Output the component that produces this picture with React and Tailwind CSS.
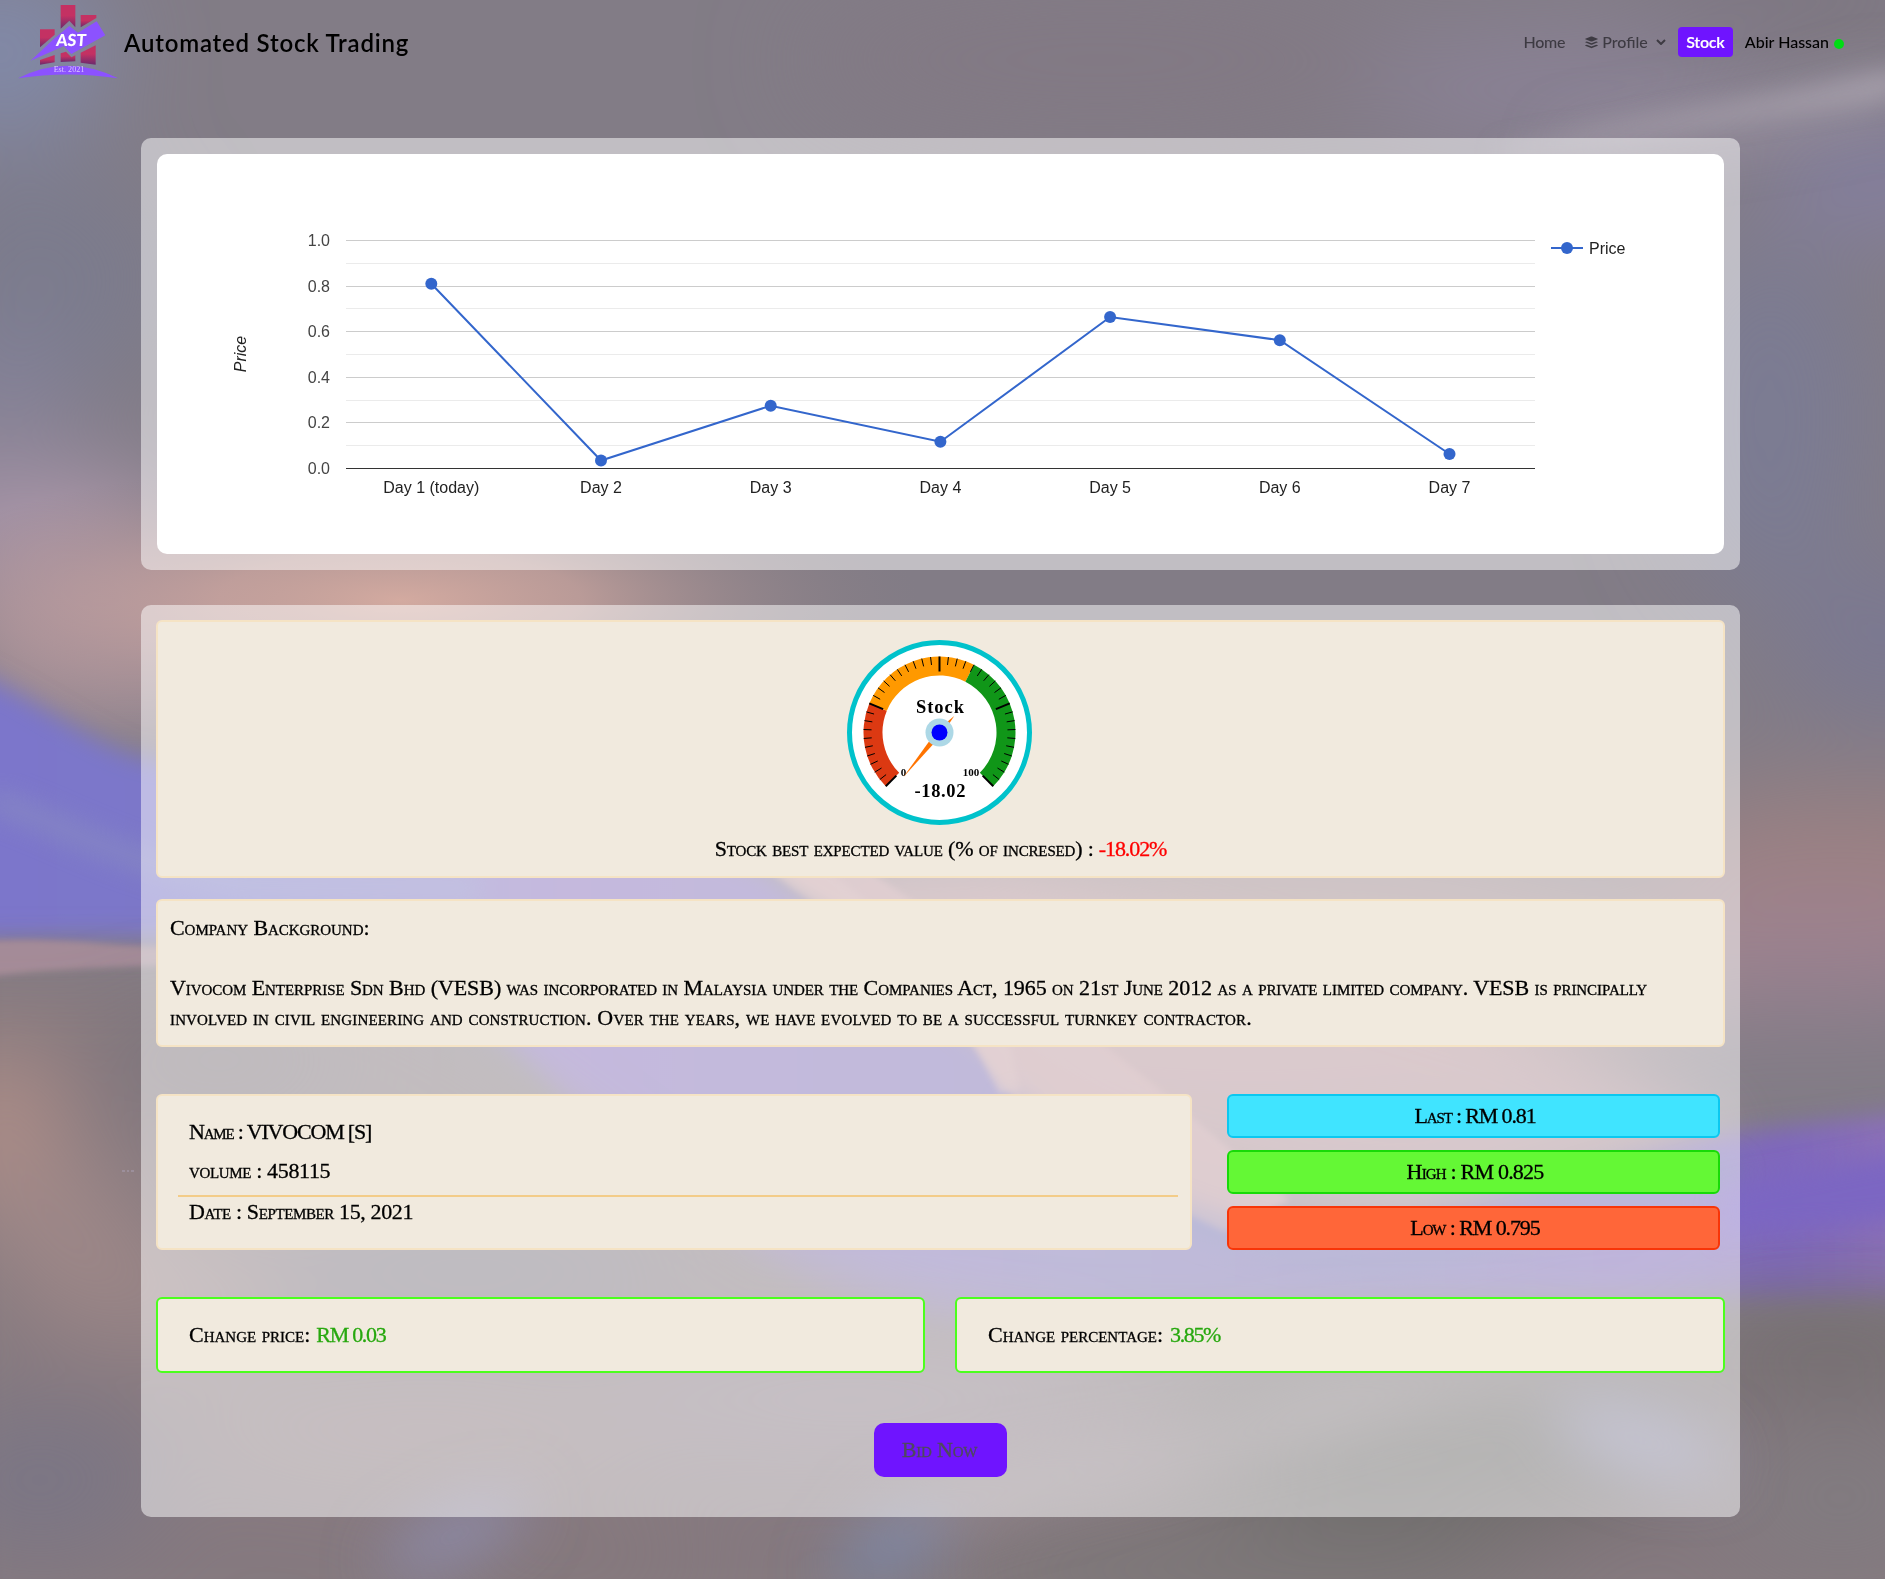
const days = ["Day 1 (today)", "Day 2", "Day 3", "Day 4", "Day 5", "Day 6", "Day 7"];
const pointY = [129.7, 306.5, 251.7, 287.8, 163, 186.2, 300];
const gridY = [86.5, 132.5, 177.5, 223.5, 268.5];
const minorY = [109.5, 154.5, 200.5, 246.5, 291.5];
const px = (i) => 274.3 + i * 169.7;

function Backdrop() {
  return (
    <svg className="absolute inset-0 h-full w-full" viewBox="0 0 1885 1579" preserveAspectRatio="none">
      <defs>
        <filter id="b4" x="-20%" y="-20%" width="140%" height="140%"><feGaussianBlur stdDeviation="3" /></filter>
        <filter id="b12" x="-30%" y="-30%" width="160%" height="160%"><feGaussianBlur stdDeviation="12" /></filter>
        <filter id="b30" x="-60%" y="-60%" width="220%" height="220%"><feGaussianBlur stdDeviation="30" /></filter>
        <filter id="b60" x="-80%" y="-80%" width="260%" height="260%"><feGaussianBlur stdDeviation="50" /></filter>
        <radialGradient id="peach">
          <stop offset="0" stopColor="#d3aaa0" />
          <stop offset="0.35" stopColor="#c3a09b" stopOpacity="0.85" />
          <stop offset="0.7" stopColor="#a08c8e" stopOpacity="0.45" />
          <stop offset="1" stopColor="#8a7f84" stopOpacity="0" />
        </radialGradient>
        <linearGradient id="violet" gradientUnits="userSpaceOnUse" x1="0" y1="0" x2="1885" y2="0">
          <stop offset="0" stopColor="#7b76cb" />
          <stop offset="0.12" stopColor="#7b78c8" />
          <stop offset="0.3" stopColor="#8a73bb" />
          <stop offset="0.6" stopColor="#7f76b3" />
          <stop offset="0.8" stopColor="#7d6db4" />
          <stop offset="0.95" stopColor="#7f68bd" />
          <stop offset="1" stopColor="#8a6fb8" />
        </linearGradient>
      </defs>
      <rect width="1885" height="1579" fill="#827c86" />
      <g filter="url(#b60)">
        <ellipse cx="0" cy="50" rx="110" ry="90" fill="#8189a8" />
        <ellipse cx="40" cy="280" rx="130" ry="120" fill="#7c7b8d" />
        <ellipse cx="0" cy="390" rx="70" ry="40" fill="#8785a0" />
        <ellipse cx="1100" cy="60" rx="300" ry="80" fill="#827984" />
        <ellipse cx="1560" cy="90" rx="200" ry="50" fill="#8b8298" />
        <ellipse cx="1800" cy="0" rx="160" ry="40" fill="#7b7580" />
        <ellipse cx="1770" cy="420" rx="100" ry="180" fill="#7c7b93" />
        <ellipse cx="1880" cy="180" rx="120" ry="40" fill="#8580a8" />
        <ellipse cx="1890" cy="640" rx="110" ry="70" fill="#7a7892" />
        <ellipse cx="1840" cy="860" rx="200" ry="70" fill="#9c8182" />
        <ellipse cx="1800" cy="950" rx="250" ry="50" fill="#9e8292" />
        <ellipse cx="20" cy="520" rx="160" ry="55" fill="#a594aa" />
        <ellipse cx="130" cy="620" rx="170" ry="75" fill="#c9a4aa" />
        <ellipse cx="1250" cy="970" rx="450" ry="130" fill="#a58c8e" />
      </g>
      <ellipse cx="400" cy="600" rx="520" ry="140" fill="url(#peach)" />
      <path d="M780 870C850 920 950 1010 1010 1080C1080 1150 1240 1200 1420 1220L1740 1130L1500 1020L1000 870Z" fill="#bd989f" opacity="0.75" filter="url(#b30)" />
      <path d="M-30 670C40 700 90 745 150 760C350 770 600 800 765 872L1000 1060C1060 1150 1180 1210 1340 1228C1500 1215 1650 1140 1780 1128L1920 1110V1300C1700 1310 1300 1290 1000 1330C700 1330 620 1120 460 1010C300 940 180 935 -30 942Z" fill="url(#violet)" filter="url(#b12)" />
      <path d="M780 872L838 904L980 1050L1010 1094C1080 1170 1170 1205 1225 1232L1290 1200L1160 1090L1000 960L870 872Z" fill="#c19da3" filter="url(#b4)" opacity="0.9" />
      <path d="M770 872L795 890L905 960L960 1020L1000 1094L1020 1090L1010 1045L870 905L830 872Z" fill="#c8a5a8" filter="url(#b4)" opacity="0.7" />
      <path d="M1010 1100C1080 1185 1190 1235 1370 1265C1520 1250 1660 1180 1740 1170" fill="none" stroke="#7076ae" strokeWidth="26" filter="url(#b12)" opacity="0.55" />
      <path d="M-10 800C60 822 110 860 240 885L480 888" fill="none" stroke="#8585c4" strokeWidth="24" filter="url(#b12)" opacity="0.9" />
      <g filter="url(#b30)">
        <path d="M-60 972H250C420 980 520 1080 650 1170C780 1260 900 1330 1100 1330H1480C1650 1310 1760 1308 1960 1320V1640H-60Z" fill="#85797f" />
      </g>
      <path d="M-20 941C60 937 100 945 160 947L330 955C220 968 60 964 -20 978Z" fill="#a48b98" filter="url(#b4)" />
      <g filter="url(#b60)">
        <ellipse cx="0" cy="1130" rx="60" ry="90" fill="#b39088" />
        <ellipse cx="60" cy="1220" rx="90" ry="60" fill="#9f8888" />
        <ellipse cx="150" cy="1300" rx="130" ry="40" fill="#9f8888" />
        <ellipse cx="470" cy="1270" rx="220" ry="30" fill="#777787" />
        <ellipse cx="220" cy="1060" rx="130" ry="40" fill="#7b757c" />
        <ellipse cx="40" cy="1480" rx="120" ry="70" fill="#7a7685" />
        <ellipse cx="420" cy="1430" rx="240" ry="40" fill="#928084" />
        <ellipse cx="850" cy="1400" rx="250" ry="40" fill="#91828f" />
        <ellipse cx="1440" cy="1440" rx="260" ry="80" fill="#6b6968" />
        <ellipse cx="1830" cy="1350" rx="150" ry="40" fill="#6e6a6c" />
        <ellipse cx="1250" cy="1570" rx="300" ry="40" fill="#787674" />
        <ellipse cx="1840" cy="1500" rx="110" ry="60" fill="#807c80" />
        <ellipse cx="560" cy="1560" rx="150" ry="30" fill="#85787c" />
      </g>
      <g filter="url(#b30)">
        <path d="M860 1520C960 1450 1150 1470 1290 1400C1400 1370 1500 1360 1600 1370L1450 1390C1300 1440 1100 1480 900 1540Z" fill="#94888f" />
        <ellipse cx="1640" cy="1440" rx="90" ry="28" transform="rotate(18 1640 1440)" fill="#8f8dae" />
        <ellipse cx="455" cy="1535" rx="80" ry="22" transform="rotate(-25 455 1535)" fill="#8e8db0" />
        <ellipse cx="890" cy="1550" rx="65" ry="22" transform="rotate(-25 890 1550)" fill="#7888ab" />
        <path d="M1560 145C1680 118 1790 110 1900 75L1900 100C1790 128 1680 140 1560 160Z" fill="#aaa2ae" />
      </g>
      <path d="M1500 150C1690 112 1800 98 1900 70V94C1800 112 1690 122 1500 156Z" fill="#a9a2ad" filter="url(#b12)" />
      <path d="M1720 1190C1780 1175 1830 1170 1920 1150V1215C1830 1232 1780 1222 1720 1240Z" fill="#7c66c2" filter="url(#b12)" />
      <path d="M122 1171h3m2 0h2m2 0h3" stroke="#a9a0b4" fill="none" />
    </svg>
  );
}

function Logo() {
  return (
    <svg className="h-20 w-[110px]" viewBox="40 0 330 240">
      <defs>
        <linearGradient id="bar" x1="0" y1="0" x2="0" y2="1">
          <stop offset="0.45" stopColor="#c43163" />
          <stop offset="1" stopColor="#6b2a6e" />
        </linearGradient>
      </defs>
      <g fill="url(#bar)">
        <path d="M118 88H162V104L118 142Z" />
        <path d="M118 180L162 165V187L118 194Z" />
        <path d="M180 15H224V82L206 62L180 86Z" />
        <path d="M180 160L196 155L212 172L224 166V184L180 186Z" />
        <path d="M240 45H287V54L240 82Z" />
        <path d="M240 158L285 136V194L240 188Z" />
      </g>
      <path d="M90 182L160 116L206 78L232 98L288 64L314 106L212 162L190 138Z" fill="#8c52ff" />
      <path d="M52 235Q200 160 352 235Q200 212 52 235Z" fill="#8c52ff" />
      <text transform="translate(210 138) skewX(-5)" textAnchor="middle" fill="#fff" className="font-['Lato'] text-[50px] font-black" textLength="90" lengthAdjust="spacingAndGlyphs">AST</text>
      <text x="205" y="217" textAnchor="middle" fill="#dccbff" className="font-['Liberation_Serif'] text-[22px]" textLength="92" lengthAdjust="spacingAndGlyphs">Est. 2021</text>
    </svg>
  );
}

function Chart() {
  return (
    <svg className="block h-[400px] w-[1567px] font-['Liberation_Sans'] text-[16px]" viewBox="0 0 1567 400">
      {minorY.map((y) => <path key={y} d={`M189 ${y}H1378`} stroke="#ebebeb" />)}
      {gridY.map((y) => <path key={y} d={`M189 ${y}H1378`} stroke="#ccc" />)}
      <path d="M189 314.5H1378" stroke="#333" />
      {["1.0", "0.8", "0.6", "0.4", "0.2", "0.0"].map((t, i) => (
        <text key={t} x="173" y={92 + i * 45.6} textAnchor="end" fill="#444">{t}</text>
      ))}
      <polyline points={pointY.map((y, i) => `${px(i)},${y}`).join(" ")} fill="none" stroke="#3366cc" strokeWidth="2" />
      {pointY.map((y, i) => <circle key={i} cx={px(i)} cy={y} r="6" fill="#3366cc" />)}
      {days.map((d, i) => <text key={d} x={px(i)} y="339" textAnchor="middle" fill="#222">{d}</text>)}
      <text transform="translate(89 200) rotate(-90)" textAnchor="middle" fill="#222" fontStyle="italic">Price</text>
      <path d="M1394 94H1426" stroke="#3366cc" strokeWidth="2" />
      <circle cx="1410" cy="94" r="6" fill="#3366cc" />
      <text x="1432" y="99.5" fill="#222">Price</text>
    </svg>
  );
}

const polar = (v, r) => {
  const a = ((-135 + v * 2.7) * Math.PI) / 180;
  return `${(Math.sin(a) * r).toFixed(2)} ${(-Math.cos(a) * r).toFixed(2)}`;
};
const band = (a, b) => `M${polar(a, 76)}A76 76 0 0 1 ${polar(b, 76)}L${polar(b, 57)}A57 57 0 0 0 ${polar(a, 57)}Z`;

function Gauge() {
  const ticks = Array.from({ length: 41 }, (_, i) => i);
  return (
    <svg className="mr-[2px] block h-[186px] w-[186px] shrink-0 font-['Liberation_Serif'] font-bold [font-variant-caps:normal]" viewBox="-92.5 -92.5 186 186">
      <circle r="90" fill="#fff" stroke="#00c2cb" strokeWidth="5" />
      <path d={band(0, 25)} fill="#dc3912" />
      <path d={band(25, 60)} fill="#ff9900" />
      <path d={band(60, 100)} fill="#109618" />
      {ticks.map((i) => (
        <path key={i} d={`M${polar(i * 2.5, 76)}L${polar(i * 2.5, i % 10 ? 68 : 61)}`} stroke="#000" strokeWidth={i % 10 ? 1 : 2} />
      ))}
      <text x="0.5" y="-20" textAnchor="middle" className="text-[18.5px]" textLength="48">Stock</text>
      <text x="-36" y="43.5" textAnchor="middle" className="text-[11px]">0</text>
      <text x="31.5" y="43.5" textAnchor="middle" className="text-[11px]">100</text>
      <text x="0.5" y="64" textAnchor="middle" className="text-[18.5px]" textLength="51">-18.02</text>
      <path d="M-36.5 45L-2.5 -2L14.7 -16.5L2.5 2Z" fill="#ff7300" />
      <circle r="14" fill="#add8e6" />
      <circle r="8" fill="#0000ff" />
    </svg>
  );
}

const card = "rounded-md border-2 border-[#f5e3c4] bg-[#f1eade]";
const change = "flex h-[76px] items-center rounded-md border-2 border-[#4bff1d] bg-[#f1eade] pl-[31px]";
const pill = "flex h-11 items-center justify-center rounded-md border-2 pl-[3px]";

export default function App() {
  return (
    <div className="relative h-[1579px] w-[1885px] overflow-hidden text-black">
      <Backdrop />
      <div className="relative flex h-full flex-col">
        <header className="flex h-[86px] items-start pr-[41px] pl-[14px] font-['Lato']">
          <Logo />
          <h1 className="mt-[26px] text-[24px] leading-[34px] font-semibold tracking-[0.78px]">Automated Stock Trading</h1>
          <nav className="ml-auto flex h-[84px] items-center text-[16px] font-medium text-[#3d3a42]">
            <span className="tracking-[-0.3px]">Home</span>
            <svg className="ml-5 h-[14px] w-[13px]" viewBox="0 0 512 512" fill="currentColor">
              <path d="M12 132L236 43q20-8 40 0l224 89q14 8 0 16L276 237q-20 8-40 0L12 148q-14-8 0-16Z" />
              <path d="M10 252l60-20 163 66q23 9 46 0l163-66 60 20q18 9 0 18L275 365q-19 8-38 0L10 270q-18-9 0-18Z" />
              <path d="M10 382l60-20 163 66q23 9 46 0l163-66 60 20q18 9 0 18L275 495q-19 8-38 0L10 400q-18-9 0-18Z" />
            </svg>
            <span className="ml-1">Profile</span>
            <svg className="ml-2 h-[6px] w-[10px]" viewBox="0 0 10 6" fill="none" stroke="currentColor" strokeWidth="2"><path d="M1 1L5 5L9 1" /></svg>
            <span className="ml-3 flex h-[30px] w-[55px] items-center justify-center rounded bg-[#6f14ff] font-bold tracking-[-0.3px] text-white">Stock</span>
            <span className="ml-3 text-black">Abir Hassan</span>
            <span className="mt-[4px] ml-[5px] h-[10px] w-[10px] rounded-full bg-[#00dc14]" />
          </nav>
        </header>

        <main className="mt-[52px] ml-[141px] w-[1599px] font-['Liberation_Serif'] text-[22px] leading-[30px] [font-variant-caps:small-caps] [-webkit-text-stroke:0.3px_currentColor]">
          <section className="rounded-[10px] bg-white/50 p-4 [-webkit-text-stroke:0]">
            <div className="overflow-hidden rounded-[10px] bg-white [font-variant-caps:normal]"><Chart /></div>
          </section>

          <section className="mt-[35px] h-[912px] rounded-[10px] bg-white/50 px-[15px] pt-[15px]">
            <div className={`${card} flex h-[258px] flex-col items-center pt-[18px]`}>
              <Gauge />
              <p className="mt-[8px] flex gap-[5px]">
                <span className="tracking-[-0.14px]">Stock best expected value (% of incresed) :</span>
                <span className="tracking-[-1.1px] text-[#ff0000]">-18.02%</span>
              </p>
            </div>

            <div className={`${card} mt-[21px] h-[148px] px-3 pt-3`}>
              <p className="tracking-[-0.05px]">Company Background:</p>
              <p className="mt-[30px] tracking-[-0.065px] whitespace-nowrap">Vivocom Enterprise Sdn Bhd (VESB) was incorporated in Malaysia under the Companies Act, 1965 on 21st June 2012 as a private limited company. VESB is principally</p>
              <p className="tracking-[0.145px]">involved in civil engineering and construction. Over the years, we have evolved to be a successful turnkey contractor.</p>
            </div>

            <div className="mt-[47px] flex">
              <div className={`${card} h-[156px] w-[1036px] px-5 pt-[21px]`}>
                <p className="mb-[9px] pl-[11px] tracking-[-1.18px]">Name : VIVOCOM [S]</p>
                <p className="pb-[9px] pl-[11px] tracking-[-0.35px]">volume : 458115</p>
                <p className="mr-[-8px] border-t-2 border-[#f3cc88] pl-[11px] tracking-[-0.38px]">Date : September 15, 2021</p>
              </div>
              <div className="ml-[35px] flex w-[493px] flex-col gap-3">
                <p className={`${pill} border-[#0bc8f0] bg-[#40e4ff] tracking-[-1.15px]`}>Last : RM 0.81</p>
                <p className={`${pill} border-[#18da08] bg-[#64f835] tracking-[-0.8px]`}>High : RM 0.825</p>
                <p className={`${pill} border-[#f83508] bg-[#ff6639] tracking-[-1.1px]`}>Low : RM 0.795</p>
              </div>
            </div>

            <div className="mt-[47px] grid grid-cols-[769px_770px] gap-[30px]">
              <p className={change}><span>Change price:</span><span className="ml-[6px] tracking-[-1.3px] text-[#27a80e]">RM 0.03</span></p>
              <p className={change}><span>Change percentage:</span><span className="ml-[7px] tracking-[-1.4px] text-[#27a80e]">3.85%</span></p>
            </div>

            <button className="mx-auto mt-[50px] flex h-[54px] w-[133px] items-center justify-center rounded-[10px] bg-[#6f14ff] pr-[2px] tracking-[-0.2px] text-[#4f4a5c] [font-variant-caps:small-caps]">Bid Now</button>
          </section>
        </main>
      </div>
    </div>
  );
}
